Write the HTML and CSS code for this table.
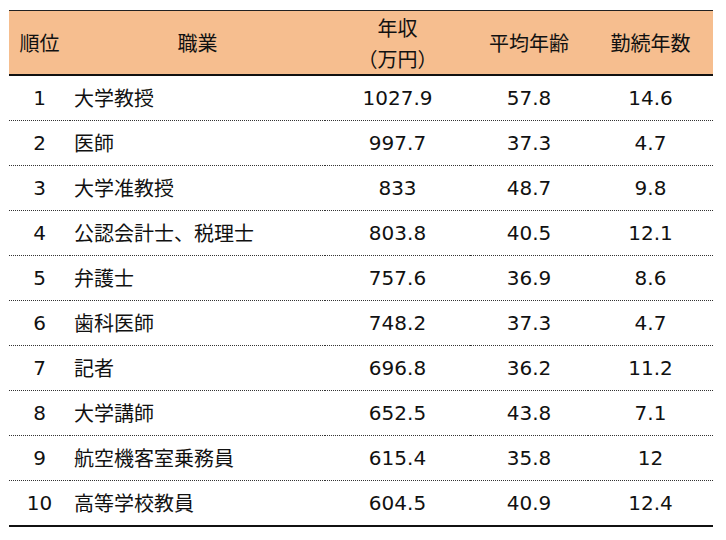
FILE: index.html
```html
<!DOCTYPE html>
<html lang="ja">
<head>
<meta charset="utf-8">
<link rel="stylesheet" href="styles.css">
</head>
<body>
<table class="rank">
  <colgroup>
    <col class="c-rank"><col class="c-job"><col class="c-pay"><col class="c-age"><col class="c-yrs">
  </colgroup>
  <thead>
    <tr>
      <th>順位</th>
      <th>職業</th>
      <th>年収<br>（万円）</th>
      <th>平均年齢</th>
      <th>勤続年数</th>
    </tr>
  </thead>
  <tbody>
    <tr><td>1</td><td class="job">大学教授</td><td>1027.9</td><td>57.8</td><td>14.6</td></tr>
    <tr><td>2</td><td class="job">医師</td><td>997.7</td><td>37.3</td><td>4.7</td></tr>
    <tr><td>3</td><td class="job">大学准教授</td><td>833</td><td>48.7</td><td>9.8</td></tr>
    <tr><td>4</td><td class="job">公認会計士、税理士</td><td>803.8</td><td>40.5</td><td>12.1</td></tr>
    <tr><td>5</td><td class="job">弁護士</td><td>757.6</td><td>36.9</td><td>8.6</td></tr>
    <tr><td>6</td><td class="job">歯科医師</td><td>748.2</td><td>37.3</td><td>4.7</td></tr>
    <tr><td>7</td><td class="job">記者</td><td>696.8</td><td>36.2</td><td>11.2</td></tr>
    <tr><td>8</td><td class="job">大学講師</td><td>652.5</td><td>43.8</td><td>7.1</td></tr>
    <tr><td>9</td><td class="job">航空機客室乗務員</td><td>615.4</td><td>35.8</td><td>12</td></tr>
    <tr><td>10</td><td class="job">高等学校教員</td><td>604.5</td><td>40.9</td><td>12.4</td></tr>
  </tbody>
</table>
</body>
</html>
```

FILE: styles.css
```css
html, body {
  margin: 0;
  padding: 0;
  background: #ffffff;
}

body {
  font-family: "DejaVu Sans", "Noto Sans CJK JP", sans-serif;
  font-size: 20px;
  color: #111111;
}

.rank {
  margin: 10px 0 0 9px;
  width: 704px;
  border-collapse: collapse;
  table-layout: fixed;
}

.c-rank { width: 61px; }
.c-job { width: 255px; }
.c-pay { width: 145px; }
.c-age { width: 118px; }
.c-yrs { width: 125px; }

.rank th {
  background: #f6be8f;
  font-family: "Noto Sans CJK JP", sans-serif;
  font-weight: normal;
  height: 63px;
  padding: 0;
  line-height: 31px;
  text-align: center;
  vertical-align: middle;
  border-top: 1px solid #222;
  border-bottom: 2px solid #111;
}

.rank td {
  height: 44px;
  padding: 0;
  text-align: center;
  vertical-align: middle;
  line-height: 24px;
  border-bottom: 1px dotted #333;
}

.rank tbody tr:last-child td {
  border-bottom: 2px solid #111;
}

.rank td.job {
  text-align: left;
  padding-left: 4px;
  font-family: "Noto Sans CJK JP", sans-serif;
}
```
